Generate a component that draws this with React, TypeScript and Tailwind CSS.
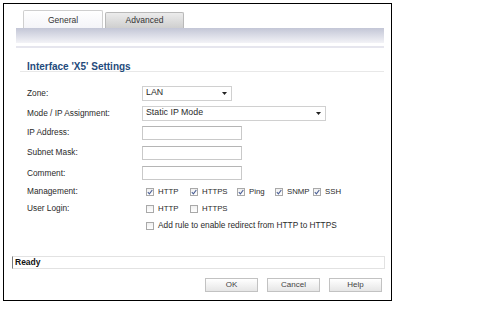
import React from 'react';

const font = { fontFamily: '"Liberation Sans", Arial, sans-serif' };

const Check = ({ checked }: { checked?: boolean }) => (
    <span className="w-[8px] h-[8px] border border-[#a9a9a9] bg-gradient-to-b from-[#f0f0f0] to-[#ffffff] flex items-center justify-center shrink-0">
        {checked && (
            <svg width="6" height="6" viewBox="0 0 6 6">
                <path d="M0.8 3.2 L2.4 4.8 L5.3 1" fill="none" stroke="#4b5f96" strokeWidth="1.1" />
            </svg>
        )}
    </span>
);

const CheckItem = ({ label, checked, w }: { label: string; checked?: boolean; w: string }) => (
    <div className={`flex items-center gap-[4px] ${w}`}>
        <Check checked={checked} />
        <span className="text-[7.8px]">{label}</span>
    </div>
);

const Row = ({ label, h, children }: { label: string; h: string; children?: React.ReactNode }) => (
    <div className={`flex items-center ${h}`}>
        <div className="w-[115px] shrink-0">{label}</div>
        {children}
    </div>
);

const Select = ({ value, w }: { value: string; w: string }) => (
    <div className={`${w} h-[15px] border border-[#d0d0d0] bg-white flex items-center justify-between pl-[3px] pr-[4px]`}>
        <span className="text-[8.8px]">{value}</span>
        <svg width="5" height="3" viewBox="0 0 5 3">
            <path d="M0 0 H5 L2.5 3 Z" fill="#222" />
        </svg>
    </div>
);

const Input = () => <div className="w-[100px] h-[14px] border border-[#c9c9c9] border-t-[#b5b5b5] bg-white" />;

const Button = ({ label }: { label: string }) => (
    <div className="w-[53px] h-[14px] border border-[#c2c2c2] bg-gradient-to-b from-[#ffffff] to-[#e6e6e6] flex items-center justify-center text-[8px] text-[#444]">
        {label}
    </div>
);

const App = () => {
    return (
        <div className="w-[481px] h-[314px] bg-white pt-[3px] pl-[3px] text-[#2a2a2a] text-[8.3px]" style={font}>
            <div className="w-[389px] h-[298px] border border-black flex flex-col">
                {/* tabs */}
                <div className="flex items-end gap-[2px] mt-[6px] ml-[19px] h-[18px]">
                    <div className="w-[80px] h-[18px] border border-b-0 border-[#cfcfcf] rounded-t-[2px] bg-gradient-to-b from-[#ffffff] to-[#f4f4f8] flex items-center justify-center pt-[1px] text-[8.5px] text-[#333]">
                        General
                    </div>
                    <div className="w-[79px] h-[16px] border border-b-0 border-[#b9b9b9] rounded-t-[2px] bg-gradient-to-b from-[#ececec] to-[#cfcfcf] flex items-center justify-center text-[8.5px] text-[#333]">
                        Advanced
                    </div>
                </div>
                <div className="ml-[12px] w-[368px] h-[15px] bg-gradient-to-b from-[#c3c6d6] to-[#f3f3f7]" />
                <div className="ml-[12px] w-[368px] h-[2px] mt-[3px] bg-[#e6e6ee]" />

                {/* heading */}
                <div className="ml-[16px] w-[364px] mt-[13px] h-[11px] border-b border-[#e8e8e8] pl-[7px]">
                    <div className="text-[10px] leading-[11px] font-bold text-[#1f4b7c]">Interface 'X5' Settings</div>
                </div>

                {/* form rows */}
                <div className="mt-[11px] pl-[23px] flex flex-col">
                    <Row label="Zone:" h="h-[20px]">
                        <Select value="LAN" w="w-[90px]" />
                    </Row>
                    <Row label="Mode / IP Assignment:" h="h-[20px]">
                        <Select value="Static IP Mode" w="w-[184px]" />
                    </Row>
                    <Row label="IP Address:" h="h-[19px]">
                        <Input />
                    </Row>
                    <Row label="Subnet Mask:" h="h-[21px]">
                        <Input />
                    </Row>
                    <Row label="Comment:" h="h-[20px]">
                        <Input />
                    </Row>
                    <Row label="Management:" h="h-[17px]">
                        <div className="flex items-center pl-[4px]">
                            <CheckItem label="HTTP" checked w="w-[44px]" />
                            <CheckItem label="HTTPS" checked w="w-[47px]" />
                            <CheckItem label="Ping" checked w="w-[38px]" />
                            <CheckItem label="SNMP" checked w="w-[38px]" />
                            <CheckItem label="SSH" checked w="w-[30px]" />
                        </div>
                    </Row>
                    <Row label="User Login:" h="h-[17px]">
                        <div className="flex items-center pl-[4px]">
                            <CheckItem label="HTTP" w="w-[44px]" />
                            <CheckItem label="HTTPS" w="w-[47px]" />
                        </div>
                    </Row>
                    <Row label="" h="h-[17px]">
                        <div className="flex items-center pl-[4px] gap-[4px]">
                            <Check />
                            <span>Add rule to enable redirect from HTTP to HTTPS</span>
                        </div>
                    </Row>
                </div>

                {/* status */}
                <div className="ml-[8px] mt-[22px] w-[373px] h-[13px] border border-[#e2e2e2] border-l-[#7a7a7a] flex items-center pl-[2px]">
                    <span className="font-bold text-[8.5px] text-[#111]">Ready</span>
                </div>

                {/* buttons */}
                <div className="mt-[9px] mr-[9px] flex justify-end gap-[9px]">
                    <Button label="OK" />
                    <Button label="Cancel" />
                    <Button label="Help" />
                </div>
            </div>
        </div>
    );
};

export default App;
